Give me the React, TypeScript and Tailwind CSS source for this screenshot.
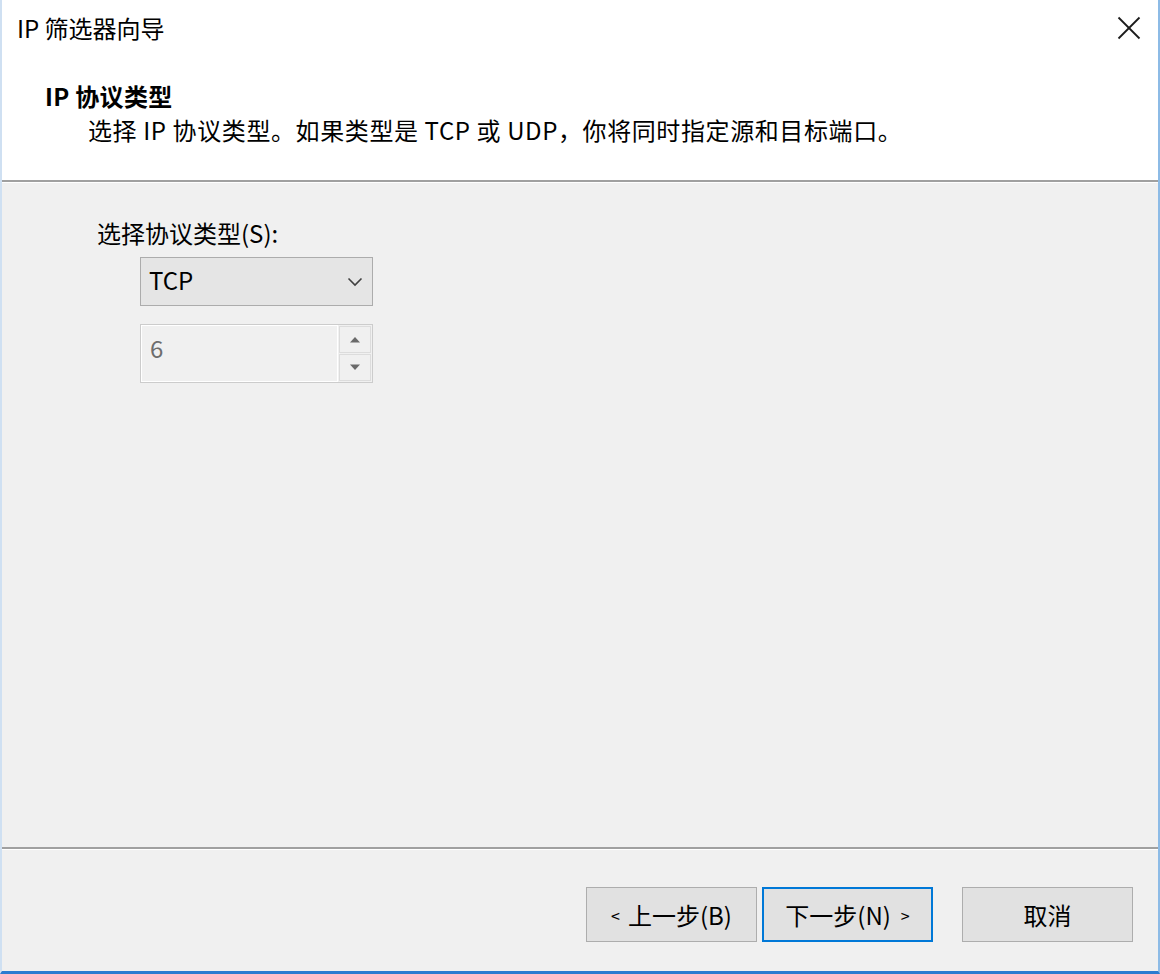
function Chevron() {
  return (
    <svg width="16" height="10" viewBox="0 0 16 10" fill="none" stroke="#404040" strokeWidth="1.6">
      <polyline points="1.5,1.5 8,8 14.5,1.5" />
    </svg>
  );
}

function Tri({ up }: { up?: boolean }) {
  return (
    <svg width="12" height="7" viewBox="0 0 12 7" fill="#6a6a6a">
      {up ? <polygon points="1,6.5 11,6.5 6,1" /> : <polygon points="1,0.5 11,0.5 6,6" />}
    </svg>
  );
}

function CloseIcon() {
  return (
    <svg width="24" height="24" viewBox="0 0 24 24" fill="none" stroke="#1a1a1a" strokeWidth="1.8">
      <line x1="1.5" y1="1.5" x2="22.5" y2="22.5" />
      <line x1="22.5" y1="1.5" x2="1.5" y2="22.5" />
    </svg>
  );
}

export default function App() {
  return (
    <div className="w-[1160px] h-[974px] flex flex-col bg-white border-l-2 border-r-2 border-b-[3px] border-l-[#cfe0f2] border-r-[#8dbbe6] border-b-[#2b7bd0] font-['Noto_Sans_CJK_SC',sans-serif] text-[24px] text-black">
      <div className="h-[56px] flex items-center justify-between pl-[15px] pr-[17px] shrink-0">
        <span className="leading-[34px]">IP 筛选器向导</span>
        <CloseIcon />
      </div>

      <div className="pl-[43px] pt-[23px] pb-[33px] shrink-0">
        <div className="font-bold leading-[34px] tracking-[0.3px]">IP 协议类型</div>
        <div className="pl-[43px] leading-[34px] tracking-[0.6px]">选择 IP 协议类型。如果类型是 TCP 或 UDP，你将同时指定源和目标端口。</div>
      </div>

      <div className="h-[2px] bg-[#a0a0a0] shrink-0" />

      <div className="flex-1 flex flex-col bg-[#f0f0f0] border-t border-white">
        <div className="flex-1 pl-[95px] pt-[37px]">
          <div className="leading-[26px]">选择协议类型(S):</div>
          <div className="pl-[43px] mt-[11px] flex flex-col">
            <div className="w-[233px] h-[49px] flex items-center justify-between pl-[8px] pr-[9px] pb-[3px] bg-[#e5e5e5] border border-[#acacac]">
              <span className="leading-none">TCP</span>
              <span className="pt-[3px]">
                <Chevron />
              </span>
            </div>
            <div className="w-[233px] h-[59px] mt-[18px] flex border border-[#cccccc] bg-[#f0f0f0]">
              <div className="flex-1 flex items-start pt-[7px] pl-[8px] border border-white text-[#6d6d6d] leading-[30px]">6</div>
              <div className="w-[34px] flex flex-col p-[1px] gap-[1px] bg-[#f0f0f0]">
                <div className="flex-1 flex items-center justify-center border border-[#dcdcdc] bg-[#f0f0f0]">
                  <Tri up />
                </div>
                <div className="flex-1 flex items-center justify-center border border-[#dcdcdc] bg-[#f0f0f0]">
                  <Tri />
                </div>
              </div>
            </div>
          </div>
        </div>

        <div className="h-[2px] bg-[#a0a0a0] shrink-0" />
        <div className="h-[122px] border-t border-white flex justify-end items-start pt-[37px] pr-[25px] shrink-0">
          <button className="w-[171px] h-[55px] bg-[#e1e1e1] border border-[#adadad] flex items-center justify-center gap-[8px]">
            <span className="text-[16px]">&lt;</span>
            <span>上一步(B)</span>
          </button>
          <button className="w-[171px] h-[55px] ml-[5px] bg-[#e1e1e1] border-2 border-[#0078d7] flex items-center justify-center gap-[10px]">
            <span>下一步(N)</span>
            <span className="text-[16px]">&gt;</span>
          </button>
          <button className="w-[171px] h-[55px] ml-[29px] bg-[#e1e1e1] border border-[#adadad] flex items-center justify-center">
            取消
          </button>
        </div>
      </div>
    </div>
  );
}
